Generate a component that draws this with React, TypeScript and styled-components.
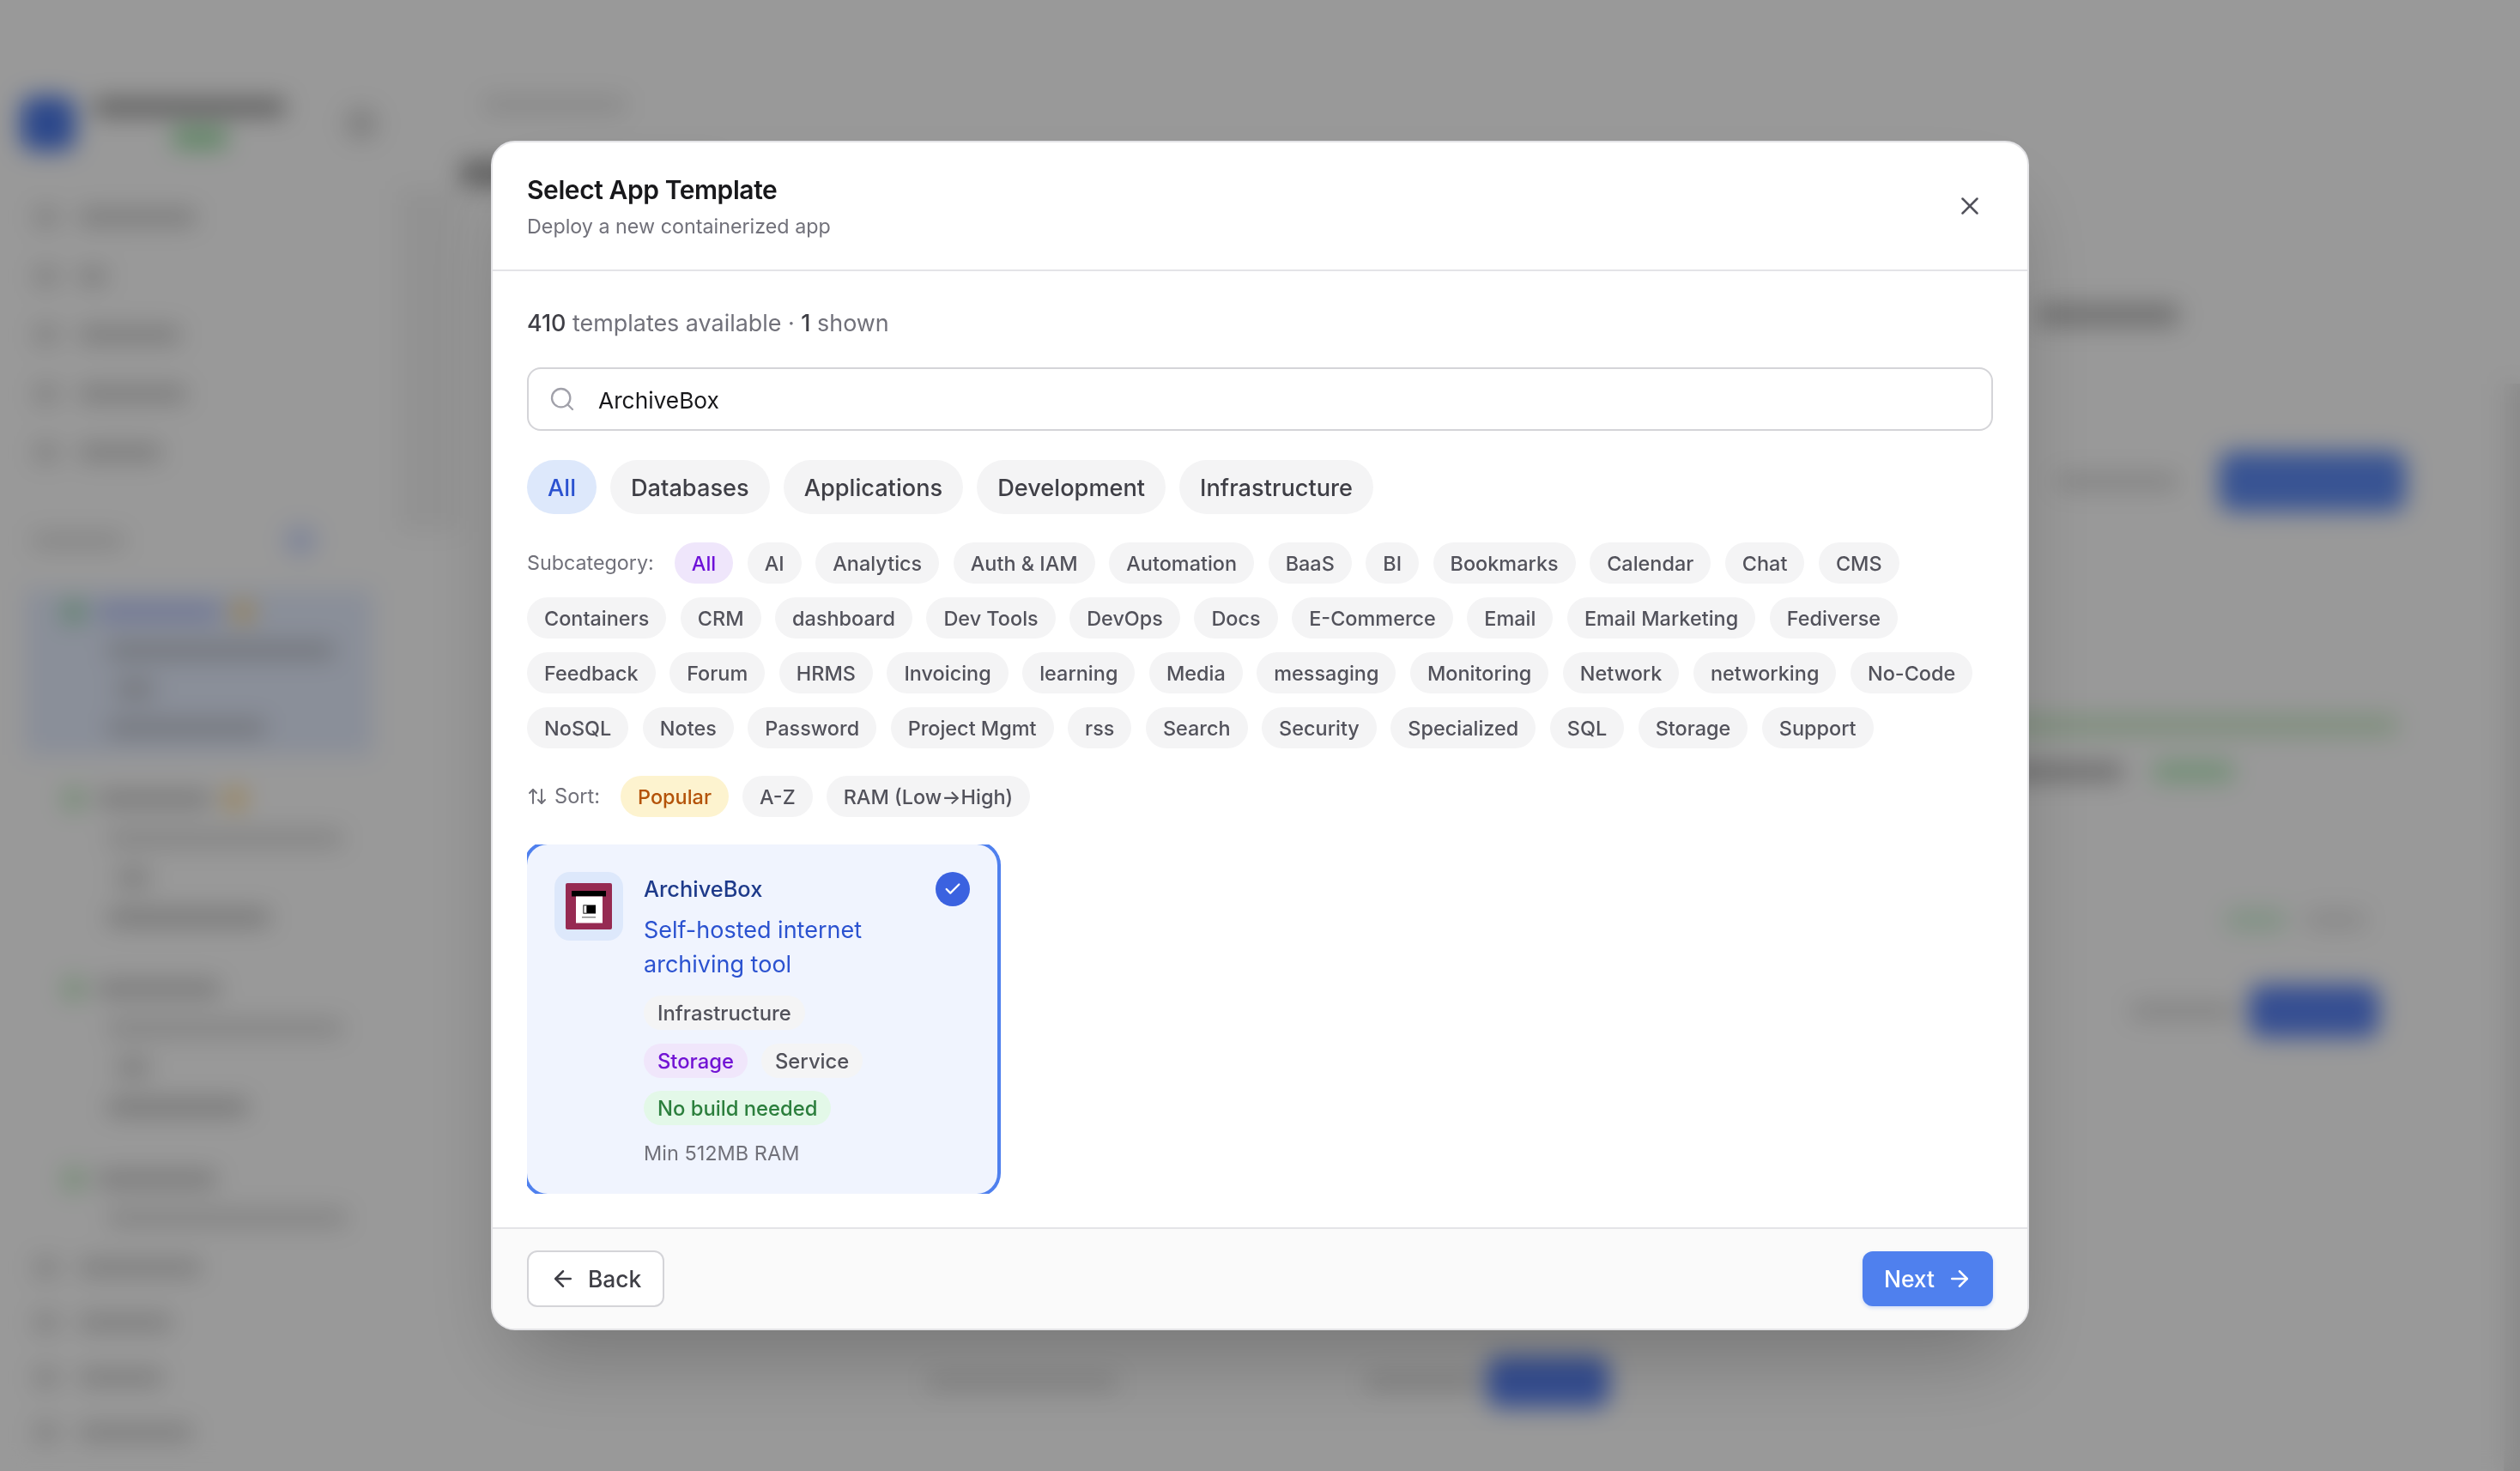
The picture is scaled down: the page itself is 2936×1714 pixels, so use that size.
import React from "react";
import styled, { createGlobalStyle } from "styled-components";
import { ArrowLeft, ArrowRight, ArrowUpDown, Check, Search, X } from "lucide-react";

const Global = createGlobalStyle`
  html, body { margin: 0; padding: 0; background: #fff; }
  body { font-family: Inter, "Liberation Sans", sans-serif; -webkit-font-smoothing: antialiased; }
  * { box-sizing: border-box; }
  button { font-family: inherit; }
`;

/* ---------- the page behind the dialog (seen only through the blur) ---------- */
const Page = styled.div`
  display: flex;
  width: 2936px;
  height: 1714px;
  overflow: hidden;
  background: #fff;
`;
const Sidebar = styled.aside`
  flex: 0 0 464px;
  display: flex;
  flex-direction: column;
  padding-top: 108px;
`;
const Blob = styled.div<{ $w: number; $h?: number; $c: string; $r?: number; $ml?: number }>`
  flex: 0 0 auto;
  width: ${(p) => p.$w}px;
  height: ${(p) => p.$h ?? 20}px;
  margin-left: ${(p) => p.$ml ?? 0}px;
  background: ${(p) => p.$c};
  border-radius: ${(p) => p.$r ?? 8}px;
`;
const BrandRow = styled.div`
  display: flex;
  align-items: center;
  height: 72px;
  padding-left: 24px;
  gap: 20px;
  margin-bottom: 39px;
`;
const BrandText = styled.div`
  display: flex;
  flex: 0 0 225px;
  flex-direction: column;
  gap: 14px;
  align-items: flex-start;
`;
const NavRow = styled.div<{ $h?: number }>`
  display: flex;
  align-items: center;
  height: ${(p) => p.$h ?? 68.5}px;
  padding-left: 40px;
  gap: 23px;
`;
const SectionRow = styled.div`
  display: flex;
  align-items: center;
  justify-content: space-between;
  height: 40px;
  margin-top: 48px;
  margin-bottom: 37px;
  padding: 0 96px 0 36px;
`;
const Deploy = styled.div<{ $active?: boolean; $h: number; $top: number; $gap: number }>`
  display: flex;
  flex-direction: column;
  align-items: flex-start;
  gap: ${(p) => p.$gap}px;
  height: ${(p) => p.$h}px;
  margin: ${(p) => p.$top}px 0 0 29px;
  width: 405px;
  padding: 13px 0 0 40px;
  overflow: hidden;
  background: ${(p) => (p.$active ? "#e6eeff" : "transparent")};
`;
const DeployTitle = styled.div`
  display: flex;
  align-items: center;
  gap: 14px;
  margin-left: 4px;
`;
const Rail = styled.div`
  flex: 0 0 72px;
  height: 400px;
  margin-top: 220px;
  background: #f4f4f4;
`;
const Main = styled.main`
  flex: 1;
  min-width: 0;
  display: flex;
  flex-direction: column;
  padding-top: 107px;
`;
const MainRow = styled.div<{ $h: number; $top?: number; $start?: boolean; $pr?: number; $pl?: number }>`
  display: flex;
  align-items: center;
  justify-content: ${(p) => (p.$start ? "flex-start" : "flex-end")};
  height: ${(p) => p.$h}px;
  margin-top: ${(p) => p.$top ?? 0}px;
  padding: 0 ${(p) => p.$pr ?? 0}px 0 ${(p) => p.$pl ?? 0}px;
`;
const RightEdge = styled.div`
  flex: 0 0 19px;
  margin-top: 447px;
  background: #e8e8e8;
`;

/* ---------- dialog ---------- */
const Overlay = styled.div`
  position: fixed;
  inset: 0;
  display: flex;
  align-items: center;
  justify-content: center;
  background: rgba(0, 0, 0, 0.4);
  backdrop-filter: blur(14px);
`;
const Modal = styled.div`
  width: 1792px;
  height: 1386px;
  display: flex;
  flex-direction: column;
  background: #fff;
  border: 2px solid #e4e4e7;
  border-radius: 28px;
  overflow: hidden;
  box-shadow: 0 50px 100px -24px rgba(0, 0, 0, 0.25);
`;
const Header = styled.header`
  flex: 0 0 150px;
  display: flex;
  align-items: center;
  justify-content: space-between;
  padding: 0 40px;
  border-bottom: 2px solid #e4e4e7;
`;
const Title = styled.h2`
  margin: 0;
  font-size: 30px;
  line-height: 44px;
  font-weight: 600;
  letter-spacing: -0.42px;
  color: #18181b;
`;
const Subtitle = styled.p`
  margin: 3px 0 0;
  font-size: 23.3px;
  line-height: 36px;
  color: #71717a;
`;
const CloseButton = styled.button`
  display: flex;
  align-items: center;
  justify-content: center;
  width: 56px;
  height: 56px;
  padding: 0;
  margin-right: -1px;
  color: #52525b;
  background: none;
  border: none;
`;
const Body = styled.div`
  flex: 1;
  display: flex;
  flex-direction: column;
  padding: 40px 40px 0;
`;
const Stats = styled.div`
  height: 40px;
  margin-bottom: 32px;
  font-size: 26.9px;
  line-height: 40px;
  color: #71717a;
`;
const StatNum = styled.span`
  font-weight: 500;
  color: #3f3f46;
`;
const SearchBox = styled.div`
  display: flex;
  align-items: center;
  gap: 26px;
  height: 74px;
  margin-bottom: 34px;
  padding: 0 23px;
  border: 2px solid #d4d4d8;
  border-radius: 16px;
  color: #a1a1aa;
`;
const SearchInput = styled.input`
  flex: 1;
  border: none;
  outline: none;
  padding: 2px 0 0;
  background: none;
  font-family: inherit;
  font-size: 26.3px;
  color: #18181b;
`;
const CategoryRow = styled.div`
  display: flex;
  gap: 16px;
  margin-bottom: 33px;
`;
const CategoryPill = styled.button<{ $active?: boolean }>`
  height: 63px;
  padding: 2px 24px 0;
  border: none;
  border-radius: 999px;
  font-size: 27.2px;
  font-weight: 500;
  color: ${(p) => (p.$active ? "#2b52d0" : "#3f3f46")};
  background: ${(p) => (p.$active ? "#dde8fb" : "#f4f4f5")};
`;
const SubRow = styled.div`
  display: flex;
  flex-wrap: wrap;
  align-items: center;
  gap: 16px 16.5px;
  margin-bottom: 32px;
`;
const Label = styled.span`
  margin-right: 7.5px;
  font-size: 23.3px;
  line-height: 48px;
  color: #71717a;
`;
const Chip = styled.button<{ $tone?: "purple" | "amber" }>`
  height: 48px;
  padding: 1px 20px 0;
  border: none;
  border-radius: 999px;
  font-size: 23.45px;
  font-weight: 500;
  white-space: nowrap;
  color: ${(p) => (p.$tone === "purple" ? "#6d10d8" : p.$tone === "amber" ? "#b45309" : "#52525b")};
  background: ${(p) => (p.$tone === "purple" ? "#efe6fb" : p.$tone === "amber" ? "#fdf3cf" : "#f4f4f5")};
`;
const SortRow = styled.div`
  display: flex;
  align-items: center;
  gap: 16px;
  margin-bottom: 32px;
`;
const SortLabel = styled.span`
  display: flex;
  align-items: center;
  gap: 8px;
  margin-right: 8px;
  font-size: 23.6px;
  line-height: 48px;
  color: #71717a;
`;
const CardClip = styled.div`
  display: grid;
  grid-template-columns: repeat(3, 1fr);
  gap: 32px;
  overflow: hidden;
`;
const Card = styled.div`
  display: flex;
  gap: 24px;
  padding: 32px 32px 29px;
  background: #f0f4fe;
  border-radius: 24px;
  box-shadow: 0 0 0 4px #4f80ee;
`;
const LogoTile = styled.div`
  flex: 0 0 80px;
  width: 80px;
  height: 80px;
  display: flex;
  align-items: center;
  justify-content: center;
  background: #dde8fb;
  border-radius: 18px;
`;
const CardText = styled.div`
  flex: 1;
  min-width: 0;
`;
const CardName = styled.div`
  font-size: 25.4px;
  line-height: 40px;
  font-weight: 500;
  color: #1e3a8a;
`;
const CardDesc = styled.div`
  margin-top: 8px;
  font-size: 27px;
  line-height: 40px;
  color: #2b52d0;
`;
const TagWrap = styled.div`
  display: flex;
  flex-wrap: wrap;
  gap: 15.5px 16px;
  margin-top: 16px;
`;
const Tag = styled.span<{ $tone?: "purple" | "green" }>`
  height: 40px;
  padding: 0 16px;
  border-radius: 999px;
  font-size: 23.8px;
  line-height: 41px;
  font-weight: 500;
  white-space: nowrap;
  color: ${(p) => (p.$tone === "purple" ? "#7214d4" : p.$tone === "green" ? "#2c7f3d" : "#52525b")};
  background: ${(p) => (p.$tone === "purple" ? "#f0e6fb" : p.$tone === "green" ? "#e3f8e8" : "#f4f4f5")};
`;
const MinRam = styled.div`
  margin-top: 14px;
  font-size: 23.5px;
  line-height: 37px;
  color: #71717a;
`;
const CheckDot = styled.div`
  flex: 0 0 40px;
  width: 40px;
  height: 40px;
  display: flex;
  align-items: center;
  justify-content: center;
  border-radius: 50%;
  background: #3b62e0;
  color: #fff;
`;
const Footer = styled.footer`
  flex: 0 0 118px;
  display: flex;
  align-items: center;
  justify-content: space-between;
  padding: 0 40px;
  background: #fafafa;
  border-top: 2px solid #e4e4e7;
`;
const BackButton = styled.button`
  display: flex;
  align-items: center;
  gap: 14px;
  height: 66px;
  padding: 0 25px;
  background: #fff;
  border: 2px solid #d4d4d8;
  border-radius: 12px;
  font-size: 26.4px;
  font-weight: 500;
  color: #3f3f46;
`;
const NextButton = styled.button`
  display: flex;
  align-items: center;
  gap: 14px;
  height: 64px;
  padding: 0 24px 0 25px;
  background: #4f80ee;
  border: none;
  border-radius: 12px;
  font-size: 26.4px;
  font-weight: 500;
  color: #fff;
  box-shadow: 0 2px 4px rgba(79, 128, 238, 0.25);
`;

const ArchiveBoxLogo = () => (
  <svg width="54" height="54" viewBox="0 0 54 54" aria-hidden="true">
    <rect width="54" height="54" rx="2" fill="#962a52" />
    <rect x="7" y="9" width="40" height="6.5" fill="#000" />
    <rect x="12" y="15.5" width="31" height="31" fill="#fff" />
    <rect x="20.5" y="25.5" width="14.5" height="10" fill="#000" />
    <rect x="21" y="26" width="3.5" height="9" fill="#fff" stroke="#555" strokeWidth="1" />
    <rect x="19" y="39" width="16" height="1.5" fill="#888" />
  </svg>
);

const row1 = ["AI", "Analytics", "Auth & IAM", "Automation", "BaaS", "BI", "Bookmarks", "Calendar", "Chat", "CMS"];
const rest = [
  "Containers", "CRM", "dashboard", "Dev Tools", "DevOps", "Docs", "E-Commerce", "Email", "Email Marketing", "Fediverse",
  "Feedback", "Forum", "HRMS", "Invoicing", "learning", "Media", "messaging", "Monitoring", "Network", "networking", "No-Code",
  "NoSQL", "Notes", "Password", "Project Mgmt", "rss", "Search", "Security", "Specialized", "SQL", "Storage", "Support",
];
const navTop = [138, 34, 120, 127, 98];
const navBottom = [144, 110, 100, 134];
const deploys = [
  { w: 143, c: "#bac5f9", dot: "#98d7b0", warn: true, active: true, lines: ["#c0c5cf", "#c8ccd6", "#c2c6d0"], l: [265, 45, 185], h: 193, top: 0, gap: 22 },
  { w: 134, c: "#cccccc", dot: "#bde8bd", warn: true, active: false, lines: ["#dcdcdc", "#d8d8d8", "#c9c9c9"], l: [275, 40, 190], h: 221, top: 25, gap: 23 },
  { w: 144, c: "#cccccc", dot: "#bde8bd", warn: false, active: false, lines: ["#dcdcdc", "#d8d8d8", "#c9c9c9"], l: [275, 40, 165], h: 222, top: 0, gap: 23 },
  { w: 140, c: "#cccccc", dot: "#bde8bd", warn: false, active: false, lines: ["#dcdcdc"], l: [280], h: 97, top: 0, gap: 22 },
];

export default function App() {
  return (
    <>
      <Global />
      <Page aria-hidden="true">
        <Sidebar>
          <BrandRow>
            <Blob $w={64} $h={64} $c="#4a78e8" $r={16} />
            <BrandText>
              <Blob $w={225} $c="#9c9c9c" />
              <Blob $w={64} $h={24} $c="#9ce0a6" $ml={93} />
            </BrandText>
            <Blob $w={36} $h={36} $c="#d8d8d8" $r={12} $ml={50} />
          </BrandRow>
          {navTop.map((w, i) => (
            <NavRow key={i}>
              <Blob $w={28} $h={24} $c="#d7d7d7" />
              <Blob $w={w} $c="#cfcfcf" />
            </NavRow>
          ))}
          <SectionRow>
            <Blob $w={110} $c="#e0e0e0" />
            <Blob $w={36} $h={32} $c="#d3deff" $r={12} />
          </SectionRow>
          {deploys.map((d, i) => (
            <Deploy key={i} $active={d.active} $h={d.h} $top={d.top} $gap={d.gap}>
              <DeployTitle>
                <Blob $w={26} $h={26} $c={d.dot} $r={13} />
                <Blob $w={d.w} $c={d.c} />
                {d.warn && <Blob $w={26} $h={26} $c="#ffd88a" $r={13} />}
              </DeployTitle>
              {d.lines.map((c, j) => (
                <Blob key={j} $w={d.l[j]} $h={j === 1 ? 26 : 20} $c={c} $ml={j === 1 ? 66 : 56} />
              ))}
            </Deploy>
          ))}
          {navBottom.map((w, i) => (
            <NavRow key={i} $h={64}>
              <Blob $w={28} $h={24} $c="#d7d7d7" />
              <Blob $w={w} $c="#d2d2d2" />
            </NavRow>
          ))}
        </Sidebar>
        <Rail />
        <Main>
          <MainRow $h={30} $start $pl={26}>
            <Blob $w={168} $c="#e4e4e4" />
          </MainRow>
          <MainRow $h={30} $top={50} $start>
            <Blob $w={300} $h={30} $c="#a0a0a0" />
          </MainRow>
          <MainRow $h={30} $top={135} $pr={378}>
            <Blob $w={166} $h={26} $c="#bcbcbc" />
          </MainRow>
          <MainRow $h={74} $top={142} $pr={114}>
            <Blob $w={142} $c="#dcdcdc" />
            <Blob $w={218} $h={70} $c="#5f8cf5" $r={16} $ml={47} />
          </MainRow>
          <MainRow $h={24} $top={235} $pr={122}>
            <Blob $w={2000} $h={24} $c="#d3eed0" $r={12} />
          </MainRow>
          <MainRow $h={24} $top={30} $pr={313}>
            <Blob $w={140} $c="#b3b3b3" />
            <Blob $w={97} $h={24} $c="#bdefc3" $r={12} $ml={33} />
          </MainRow>
          <MainRow $h={28} $top={147} $pr={159}>
            <Blob $w={73} $h={24} $c="#d5f4db" $r={12} />
            <Blob $w={73} $h={24} $c="#e6e6e6" $r={12} $ml={20} />
          </MainRow>
          <MainRow $h={64} $top={60} $pr={145}>
            <Blob $w={122} $c="#dcdcdc" />
            <Blob $w={152} $h={62} $c="#5a83f3" $r={16} $ml={16} />
          </MainRow>
          <MainRow $h={60} $top={370} $start $pl={544}>
            <Blob $w={223} $c="#e0e0e0" />
            <Blob $w={133} $c="#dcdcdc" $ml={287} />
            <Blob $w={143} $h={60} $c="#5a83f3" $r={16} $ml={9} />
          </MainRow>
        </Main>
        <RightEdge />
      </Page>
      <Overlay>
        <Modal role="dialog">
          <Header>
            <div>
              <Title>Select App Template</Title>
              <Subtitle>Deploy a new containerized app</Subtitle>
            </div>
            <CloseButton aria-label="Close">
              <X size={34} strokeWidth={1.75} />
            </CloseButton>
          </Header>
          <Body>
            <Stats>
              <StatNum>410</StatNum> templates available · <StatNum>1</StatNum> shown
            </Stats>
            <SearchBox>
              <Search size={32} strokeWidth={1.75} />
              <SearchInput readOnly value="ArchiveBox" />
            </SearchBox>
            <CategoryRow>
              <CategoryPill $active>All</CategoryPill>
              <CategoryPill>Databases</CategoryPill>
              <CategoryPill>Applications</CategoryPill>
              <CategoryPill>Development</CategoryPill>
              <CategoryPill>Infrastructure</CategoryPill>
            </CategoryRow>
            <SubRow>
              <Label>Subcategory:</Label>
              <Chip $tone="purple">All</Chip>
              {row1.map((c) => (
                <Chip key={c}>{c}</Chip>
              ))}
              {rest.map((c) => (
                <Chip key={c}>{c}</Chip>
              ))}
            </SubRow>
            <SortRow>
              <SortLabel>
                <ArrowUpDown size={24} strokeWidth={2} />
                Sort:
              </SortLabel>
              <Chip $tone="amber">Popular</Chip>
              <Chip>A-Z</Chip>
              <Chip>RAM (Low→High)</Chip>
            </SortRow>
            <CardClip>
              <Card>
                <LogoTile>
                  <ArchiveBoxLogo />
                </LogoTile>
                <CardText>
                  <CardName>ArchiveBox</CardName>
                  <CardDesc>Self-hosted internet archiving tool</CardDesc>
                  <TagWrap>
                    <Tag>Infrastructure</Tag>
                    <Tag $tone="purple">Storage</Tag>
                    <Tag>Service</Tag>
                    <Tag $tone="green">No build needed</Tag>
                  </TagWrap>
                  <MinRam>Min 512MB RAM</MinRam>
                </CardText>
                <CheckDot>
                  <Check size={22} strokeWidth={2.5} />
                </CheckDot>
              </Card>
            </CardClip>
          </Body>
          <Footer>
            <BackButton>
              <ArrowLeft size={30} strokeWidth={2} />
              Back
            </BackButton>
            <NextButton>
              Next
              <ArrowRight size={30} strokeWidth={2} />
            </NextButton>
          </Footer>
        </Modal>
      </Overlay>
    </>
  );
}
